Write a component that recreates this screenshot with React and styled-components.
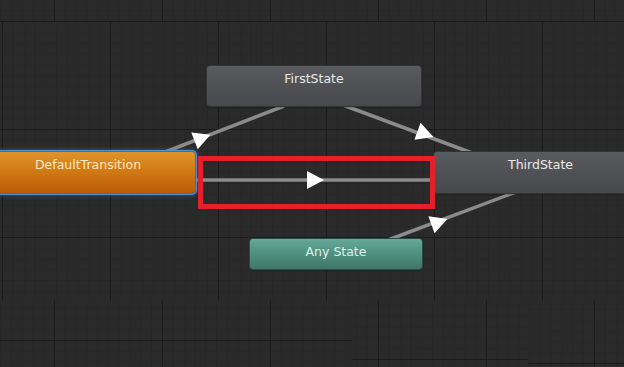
import React from "react";
import styled, { createGlobalStyle } from "styled-components";

const Global = createGlobalStyle`
  html, body { margin: 0; padding: 0; background: #292929; }
  body { font-family: "DejaVu Sans", "Liberation Sans", sans-serif; }
`;

const Canvas = styled.div`
  position: relative;
  width: 624px;
  height: 367px;
  overflow: hidden;
  display: flex;
  flex-direction: column;
  background: #292929;
`;

const Band = styled.div`
  display: flex;
  flex: 0 0 ${(p) => p.$h}px;
`;

const GridCell = styled.div`
  flex: ${(p) => (p.$w ? `0 0 ${p.$w}px` : "1 1 auto")};
  background-color: #2a2a2a;
  background-image:
    linear-gradient(to right, #1b1b1b 1px, transparent 1px),
    linear-gradient(to bottom, #1b1b1b 1px, transparent 1px),
    linear-gradient(to right, #272727 1px, transparent 1px),
    linear-gradient(to bottom, #272727 1px, transparent 1px);
  background-size: 108px 100%, 100% 108px, 10.8px 100%, 100% 10.8px;
  background-position: ${(p) => p.$x}px 0, 0 ${(p) => p.$y}px,
    ${(p) => p.$x}px 0, 0 ${(p) => p.$y}px;
`;

const Edges = styled.svg`
  position: absolute;
  left: 0;
  top: 0;
  width: 624px;
  height: 367px;
  pointer-events: none;
`;

const variants = {
  normal: {
    bg: "linear-gradient(to bottom, #5a5b5e 0%, #4f5054 55%, #48494d 100%)",
    color: "#e8e8e8",
    ring: "0 0 0 1px #333436, 0 1px 2px rgba(0,0,0,0.55)",
  },
  default: {
    bg: "linear-gradient(to bottom, #e0932b 0%, #cf7814 50%, #b85d07 100%)",
    color: "#f8e8c8",
    ring: "0 0 0 1px #3573b0, 0 0 0 2px #4b93d6, 0 0 5px 2px rgba(60,130,200,0.6)",
  },
  any: {
    bg: "linear-gradient(to bottom, #63aa97 0%, #4f8f7e 50%, #3f7668 100%)",
    color: "#dff0ea",
    ring: "0 0 0 1px #2b4c44, 0 1px 2px rgba(0,0,0,0.55)",
  },
};

const Node = styled.div`
  position: absolute;
  left: ${(p) => p.$x}px;
  top: ${(p) => p.$y}px;
  width: ${(p) => p.$w}px;
  height: ${(p) => p.$h}px;
  box-sizing: border-box;
  border-radius: 3px;
  background: ${(p) => variants[p.$v].bg};
  box-shadow: ${(p) => variants[p.$v].ring};
  color: ${(p) => variants[p.$v].color};
  font-family: "DejaVu Sans", sans-serif;
  font-size: 12.5px;
  line-height: 26px;
  text-align: center;
  white-space: nowrap;
`;

const Highlight = styled.div`
  position: absolute;
  left: 198px;
  top: 156px;
  width: 237px;
  height: 53px;
  box-sizing: border-box;
  border: 5px solid #e5202b;
`;

const Arrow = ({ x, y, a }) => (
  <g transform={`translate(${x} ${y}) rotate(${a})`}>
    <polygon points="9,0 -8,-9 -8,9" fill="#ffffff" />
  </g>
);

const Line = ({ x1, y1, x2, y2 }) => (
  <line
    x1={x1}
    y1={y1}
    x2={x2}
    y2={y2}
    stroke="#8b8b8b"
    strokeWidth="3.5"
    strokeLinecap="butt"
  />
);

export default function App() {
  return (
    <>
      <Global />
      <Canvas>
        <Band $h={21}>
          <GridCell $x={54} $y={21} />
        </Band>
        <Band $h={279}>
          <GridCell $x={2} $y={0} />
        </Band>
        <Band $h={67}>
          <GridCell $w={352} $x={54} $y={40} />
          <GridCell $w={176} $x={26} $y={59} />
          <GridCell $x={66} $y={63} />
        </Band>

        <Edges viewBox="0 0 624 367">
          <Line x1={160} y1={154} x2={284} y2={106} />
          <Line x1={343} y1={105} x2={472} y2={153} />
          <Line x1={388} y1={240} x2={516} y2={192} />
          <Line x1={194} y1={180} x2={434} y2={180} />
          <Arrow x={202} y={138} a={-21} />
          <Arrow x={425} y={134} a={20} />
          <Arrow x={439} y={222} a={-20} />
          <Arrow x={315} y={180} a={0} />
        </Edges>

        <Node $v="normal" $x={207} $y={66} $w={214} $h={40}>
          FirstState
        </Node>
        <Node $v="default" $x={-19} $y={152} $w={214} $h={41}>
          DefaultTransition
        </Node>
        <Node $v="normal" $x={434} $y={152} $w={213} $h={41}>
          ThirdState
        </Node>
        <Node $v="any" $x={250} $y={239} $w={172} $h={30}>
          Any State
        </Node>

        <Highlight />
      </Canvas>
    </>
  );
}
